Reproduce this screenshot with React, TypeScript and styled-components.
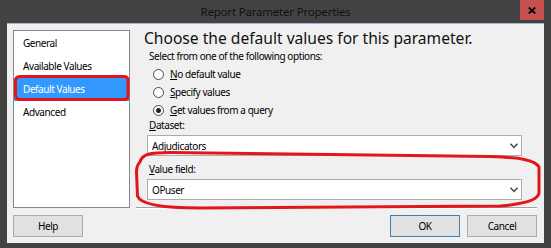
import React from "react";
import styled, { createGlobalStyle } from "styled-components";

const GlobalStyle = createGlobalStyle`
  html, body { margin: 0; padding: 0; background: #434343; }
  body { font-family: "Segoe UI", "Noto Sans", sans-serif; }
  * { box-sizing: border-box; }
`;

const Window = styled.div`
  position: relative;
  width: 551px;
  height: 248px;
  background: #434343;
  display: flex;
  flex-direction: column;
  overflow: hidden;
`;

const TitleBar = styled.div`
  height: 23px;
  display: grid;
  grid-template-columns: 1fr auto 1fr;
  align-items: start;
`;

const Title = styled.div`
  grid-column: 2;
  font-size: 11.5px;
  letter-spacing: -0.2px;
  line-height: 24px;
  color: #111;
`;

const CloseButton = styled.div`
  grid-column: 3;
  justify-self: end;
  margin-right: 7px;
  width: 24px;
  height: 20px;
  background: #c75050;
  display: flex;
  align-items: center;
  justify-content: center;
`;

const Client = styled.div`
  flex: 1;
  margin: 0 7px 5px 7px;
  background: #f0f0f0;
  border-top: 1px solid #9db5d2;
  padding: 6px 7px 6px 6px;
  display: flex;
  flex-direction: column;
  gap: 7px;
  font-size: 10px;
  letter-spacing: -0.42px;
`;

const Body = styled.div`
  display: flex;
  gap: 6px;
  height: 178px;
`;

const ListBox = styled.div`
  width: 117px;
  border: 1px solid #828790;
  background: #fff;
  padding-top: 1px;
`;

const ListItem = styled.div<{ $selected?: boolean }>`
  height: 23px;
  line-height: 23px;
  padding-left: 9px;
  background: ${(p) => (p.$selected ? "#3399ff" : "transparent")};
  color: ${(p) => (p.$selected ? "#fff" : "#000")};
`;

const Panel = styled.div`
  flex: 1;
  display: flex;
  flex-direction: column;
  padding: 0 15px 0 11px;
  border-bottom: 1px solid #a0a0a0;
  box-shadow: 0 1px 0 #fff;
`;

const Heading = styled.div`
  font-size: 15.6px;
  letter-spacing: 0;
  line-height: 22px;
  margin: -3px 0 0 -3px;
  color: #111;
`;

const SmallText = styled.div`
  line-height: 14px;
  padding-left: 2px;
  color: #000;
`;

const RadioList = styled.div`
  margin-top: 2px;
  padding-left: 6px;
  display: flex;
  flex-direction: column;
`;

const RadioRow = styled.div`
  height: 18px;
  display: flex;
  align-items: center;
  gap: 6px;
  color: #000;
`;

const RadioCircle = styled.span<{ $checked?: boolean }>`
  width: 11px;
  height: 11px;
  border-radius: 50%;
  border: 1px solid #4a4a4a;
  background: #fff;
  display: flex;
  align-items: center;
  justify-content: center;
  &::after {
    content: "";
    width: 5px;
    height: 5px;
    border-radius: 50%;
    background: ${(p) => (p.$checked ? "#222" : "transparent")};
  }
`;

const FieldLabel = styled(SmallText)<{ $gap: number }>`
  margin-top: ${(p) => p.$gap}px;
`;

const Combo = styled.div`
  margin-top: 3px;
  height: 21px;
  border: 1px solid #acacac;
  background: #fff;
  display: flex;
  align-items: center;
  justify-content: space-between;
  padding: 0 3px 0 4px;
  color: #000;
`;

const Footer = styled.div`
  display: flex;
  gap: 7px;
  height: 22px;
`;

const Spacer = styled.div`
  flex: 1;
`;

const Button = styled.div<{ $default?: boolean }>`
  width: 70px;
  height: 22px;
  border: 1px solid ${(p) => (p.$default ? "#3c7fb1" : "#adadad")};
  background: #e1e1e1;
  display: flex;
  align-items: center;
  justify-content: center;
  color: #000;
`;

const Overlay = styled.svg`
  position: absolute;
  left: 0;
  top: 0;
  pointer-events: none;
`;

const Chevron = () => (
  <svg width="8" height="6" viewBox="0 0 8 6">
    <polyline points="0.5,0.8 4,4.5 7.5,0.8" fill="none" stroke="#444" strokeWidth="1.4" />
  </svg>
);

export default function App() {
  return (
    <>
      <GlobalStyle />
      <Window>
        <TitleBar>
          <Title>Report Parameter Properties</Title>
          <CloseButton>
            <svg width="8" height="7" viewBox="0 0 8 7">
              <path d="M0.8 0.5 L7.2 6.5 M7.2 0.5 L0.8 6.5" stroke="#000" strokeWidth="1.8" />
            </svg>
          </CloseButton>
        </TitleBar>
        <Client>
          <Body>
            <ListBox>
              <ListItem>General</ListItem>
              <ListItem>Available Values</ListItem>
              <ListItem $selected>Default Values</ListItem>
              <ListItem>Advanced</ListItem>
            </ListBox>
            <Panel>
              <Heading>Choose the default values for this parameter.</Heading>
              <SmallText>Select from one of the following options:</SmallText>
              <RadioList>
                <RadioRow>
                  <RadioCircle />
                  <span><u>N</u>o default value</span>
                </RadioRow>
                <RadioRow>
                  <RadioCircle />
                  <span><u>S</u>pecify values</span>
                </RadioRow>
                <RadioRow>
                  <RadioCircle $checked />
                  <span><u>G</u>et values from a query</span>
                </RadioRow>
              </RadioList>
              <FieldLabel $gap={-1}><u>D</u>ataset:</FieldLabel>
              <Combo>
                <span>Adjudicators</span>
                <Chevron />
              </Combo>
              <FieldLabel $gap={6}><u>V</u>alue field:</FieldLabel>
              <Combo>
                <span>OPuser</span>
                <Chevron />
              </Combo>
            </Panel>
          </Body>
          <Footer>
            <Button>Help</Button>
            <Spacer />
            <Button $default>OK</Button>
            <Button>Cancel</Button>
          </Footer>
        </Client>
        <Overlay width="551" height="248" viewBox="0 0 551 248">
          <path
            d="M20 76.5 L124 76.5 Q128 76.5 128 80.5 L128 95.5 Q128 99.5 124 99.5 L20 99.5 Q15.5 99.5 15.5 95 L15.5 81 Q15.5 76.5 20 76.5 Z"
            fill="none"
            stroke="#e3161e"
            strokeWidth="3"
          />
          <path
            d="M140 162 C142 154 150 152.5 170 152.5 L490 156.5 C520 157.5 535 160 539 167 L539 193 C538 200 525 204 500 206 L200 208 C160 208 140 204 137.5 196 L136.5 172 C136.5 167 138 164 140 162 Z"
            fill="none"
            stroke="#e3161e"
            strokeWidth="3"
          />
        </Overlay>
      </Window>
    </>
  );
}
